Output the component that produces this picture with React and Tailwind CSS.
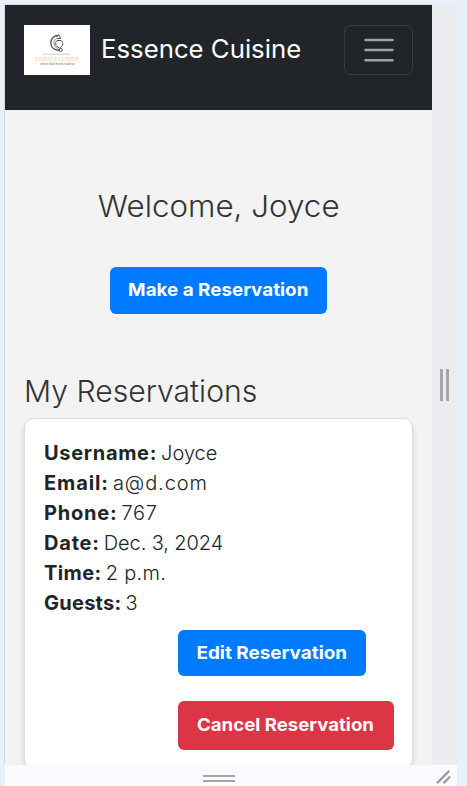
const reservation = [
  ['Username:', 'Joyce', 'tracking-[0.68px]', 'tracking-[0px]'],
  ['Email:', 'a@d.com', 'tracking-[0.9px]', 'tracking-[0.9px]'],
  ['Phone:', '767', 'tracking-[0.8px]', 'tracking-[0.7px]'],
  ['Date:', 'Dec. 3, 2024', 'tracking-[0.8px]', 'tracking-[-0.1px]'],
  ['Time:', '2 p.m.', 'tracking-[0.4px]', 'tracking-[0.3px]'],
  ['Guests:', '3', 'tracking-[0.25px]', 'tracking-[0px]'],
];

function Logo() {
  return (
    <svg viewBox="0 0 66 50" className="block h-[50px] w-[66px] bg-white">
      <g fill="none" stroke="#555" strokeWidth="1">
        <path d="M34.5 10.5C29.5 10.5 26.8 14 26.8 18C26.8 22 30 25.5 35.5 25.5" strokeWidth="1.3" />
        <path d="M32 13.5C30 15 29.5 18 30.5 20.5C31.5 22.5 33 23.5 35 24.5" strokeWidth=".7" />
        <path d="M33 15.5H37C40.5 18.5 38.5 21.5 35.5 23C31.5 21.5 30.5 18.5 33 15.5Z" />
        <circle cx="36.7" cy="25" r="1.6" />
        <path d="M32.5 12L34.5 9.5L36.8 13.5H32.5" />
      </g>
      <path d="M19 29.2H46" stroke="#bbb" strokeWidth=".7" />
      <text x="11" y="36" textLength="44" lengthAdjust="spacingAndGlyphs" fill="#f9c98a" fontSize="6.5" fontFamily="Liberation Serif, serif">ESSENCE CUISINE</text>
      <text x="16" y="40" textLength="35" lengthAdjust="spacingAndGlyphs" fill="#777" fontSize="3" fontFamily="Liberation Sans, sans-serif">where bold meets tradition</text>
    </svg>
  );
}

export default function App() {
  return (
    <div className="flex h-[786px] w-[467px] overflow-hidden bg-[#e9f0f9] pl-[5px] pt-[5px] font-['Inter','Open_Sans',sans-serif] text-[#212529]">
      <div className="flex w-[452px] flex-col">
        <div className="flex h-[760px]">
          <main className="h-[760px] w-[427px] overflow-hidden bg-[#f3f3f3] shadow-[-1px_-1px_0_#d5d9df]">
            <header className="flex h-[105px] items-start bg-[#212529] px-[19px] pt-5">
              <Logo />
              <span className="ml-[11px] mt-[5px] origin-left scale-x-[1.03] whitespace-nowrap text-[25px] leading-[38px] text-white">Essence Cuisine</span>
              <button aria-label="Menu" className="ml-auto flex h-[50px] w-[69px] flex-col items-center justify-center rounded-[7px] border border-[#383b3f]">
                <svg viewBox="0 0 30 24" className="h-6 w-[30px]" fill="none" stroke="#a0a2a4" strokeWidth="2.5" strokeLinecap="round">
                  <path d="M1.5 2H28.5M1.5 12H28.5M1.5 22.2H28.5" />
                </svg>
              </button>
            </header>
            <section className="flex h-[157px] flex-col items-center pt-[78px]">
              <h1 className="scale-x-[1.045] whitespace-nowrap text-[30px] font-light leading-[37px] text-[#333]">Welcome, Joyce</h1>
            </section>
            <button className="ml-[105px] flex h-[47px] w-[217px] items-center justify-center whitespace-nowrap rounded-md bg-[#007bff] pb-0.5 text-[18px] font-bold text-white"><span className="scale-x-[1.045]">Make a Reservation</span></button>
            <h2 className="ml-[19px] mt-[59px] origin-left scale-x-[1.005] whitespace-nowrap text-[30px] font-light leading-[36px] text-[#333]">My Reservations</h2>
            <section className="mx-[19px] mt-[9px] h-[351px] rounded-[10px] border border-[#dedede] bg-white px-[18px] pt-[19px] shadow-[0_3px_6px_rgba(0,0,0,0.12)]">
              {reservation.map(([label, value, labelTracking, valueTracking]) => (
                <p key={label} className="ml-px flex h-[30px] items-center gap-1 whitespace-nowrap text-[20px] leading-[30px]">
                  <strong className={`font-bold ${labelTracking}`}>{label}</strong>
                  <span className={`font-light ${valueTracking}`}>{value}</span>
                </p>
              ))}
              <div className="ml-[135px] mt-3 flex flex-col items-start gap-[25px]">
                <button className="flex h-[46px] w-[188px] items-center justify-center whitespace-nowrap rounded-md bg-[#007bff] pb-0.5 text-[18px] font-bold text-white"><span className="scale-x-[1.05]">Edit Reservation</span></button>
                <button className="flex h-[49px] w-[216px] items-center justify-center whitespace-nowrap rounded-md bg-[#dc3545] pb-0.5 pr-px text-[18px] font-bold text-white"><span className="scale-x-[1.035]">Cancel Reservation</span></button>
              </div>
            </section>
          </main>
          <aside className="flex w-[25px] items-start justify-center gap-[3px] bg-[#ebecf0] pr-px pt-[364px]">
            <i className="h-8 w-[3px] bg-[#a6a6a6]" />
            <i className="h-8 w-[3px] bg-[#a6a6a6]" />
          </aside>
        </div>
        <footer className="flex h-[21px] bg-[#f9fbff]">
          <div className="ml-[198px] mt-[10px] flex w-8 flex-col gap-[3px]">
            <i className="h-[2px] bg-[#a6a6a6]" />
            <i className="h-[2px] bg-[#a6a6a6]" />
          </div>
          <svg viewBox="0 0 18 18" className="ml-auto mr-1 mt-1 h-[17px] w-[17px]" fill="none" stroke="#9d9d9d" strokeWidth="2.4">
            <path d="M1 15L14 2M8 15L15 8" />
          </svg>
        </footer>
      </div>
    </div>
  );
}
